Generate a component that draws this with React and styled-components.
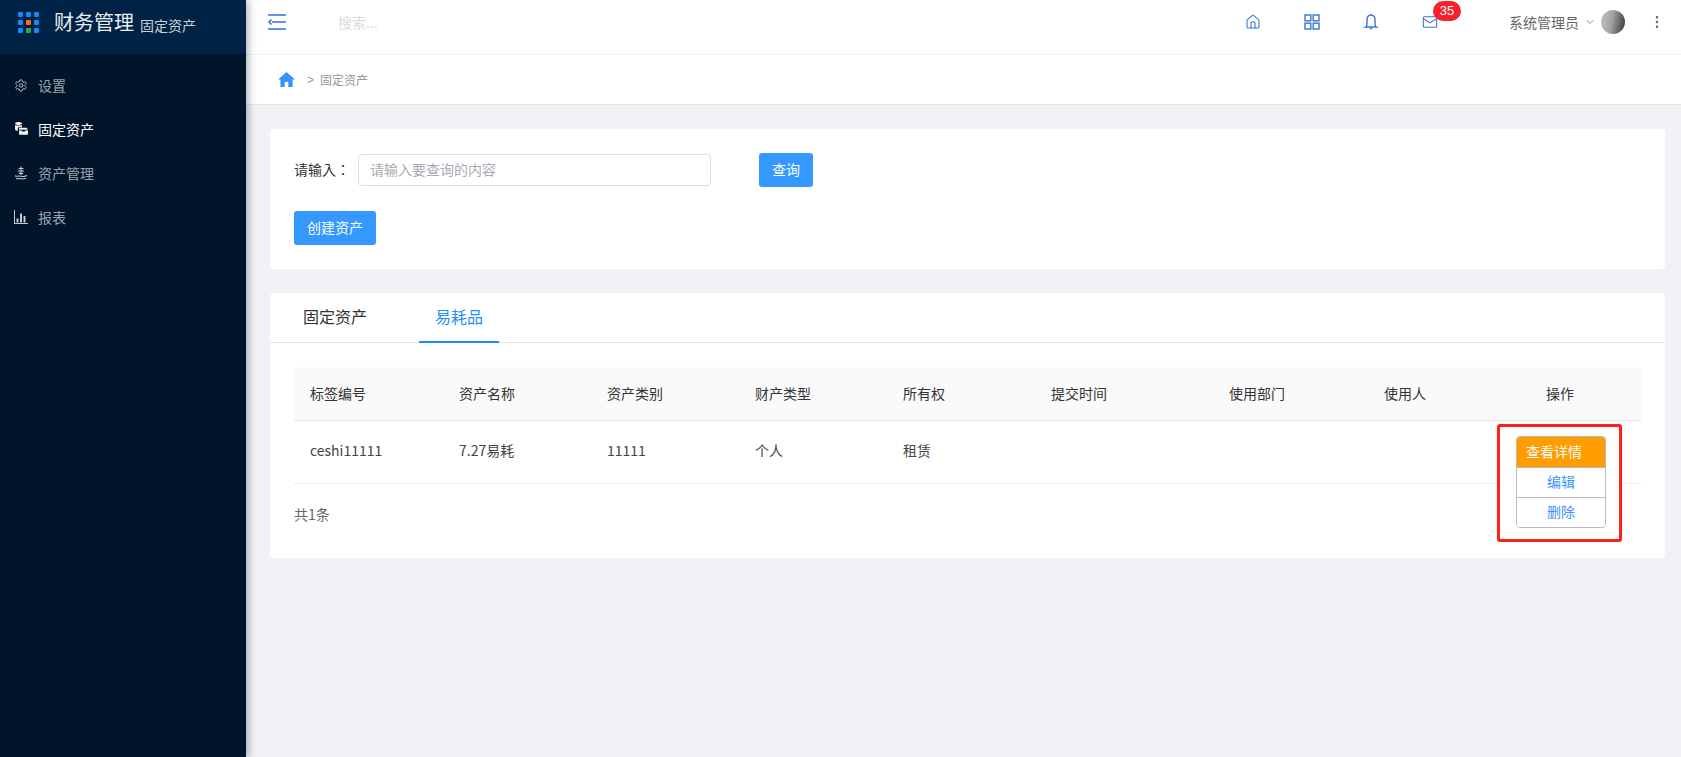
import React from 'react';
import styled, { createGlobalStyle } from 'styled-components';
import { Home, Mail, ChevronDown, MoreVertical, Settings } from 'lucide-react';

const Global = createGlobalStyle`
  html, body { margin: 0; padding: 0; height: 100%; background: #f0f2f5; }
  body { font-family: "Noto Sans CJK SC", "Noto Sans", sans-serif; font-size: 14px; color: #333; overflow: hidden; }
  * { box-sizing: border-box; }
`;
const Shell = styled.div`display: flex; height: 757px; width: 100%;`;
const Sidebar = styled.aside`
  width: 246px; flex: none; background: #00142a; box-shadow: 2px 0 8px rgba(0,21,41,.35); position: relative; z-index: 2;
`;
const Brand = styled.div`
  height: 54px; background: #002244; display: flex; align-items: center; padding: 0 0 10px 18px; color: #e8edf2;
`;
const BrandTitle = styled.span`font-size: 20px; line-height: 28px; margin-left: 15px;`;
const BrandSub = styled.span`font-size: 14px; line-height: 20px; margin-left: 6px; margin-top: 6px; color: #c8d0d8;`;
const Menu = styled.nav`padding-top: 9px; display: flex; flex-direction: column;`;
const MenuItem = styled.a`
  height: 44px; display: flex; align-items: center; padding-left: 14px; gap: 10px; font-size: 14px;
  color: ${p => (p.$active ? '#fff' : 'rgba(255,255,255,.62)')};
`;
const MenuIcon = styled.span`width: 14px; height: 14px; display: flex; align-items: center; justify-content: center; color: ${p => (p.$active ? '#f0f0f0' : '#c5cad0')};`;
const Main = styled.main`flex: 1; min-width: 0; display: flex; flex-direction: column;`;
const Header = styled.header`
  height: 55px; background: #fff; border-bottom: 1px solid #f2f2f2; display: flex; align-items: center; padding: 0 0 10px 22px; flex: none;
`;
const Search = styled.span`margin-left: 52px; color: #dcdcdc; font-size: 14px; flex: 1;`;
const HeadIcons = styled.div`display: flex; align-items: center; gap: 43px; color: #3a72d8; margin-right: 71px;`;
const IconWrap = styled.span`position: relative; display: flex; width: 16px; height: 16px;`;
const Badge = styled.span`
  position: absolute; left: 11px; top: -13px; width: 28px; height: 20px; border-radius: 10px; background: #f5222d; color: #fff;
  font-size: 13px; line-height: 20px; text-align: center; font-family: "Liberation Sans", sans-serif;
`;
const User = styled.div`display: flex; align-items: center; color: #666; font-size: 14px;`;
const Avatar = styled.span`
  width: 24px; height: 24px; border-radius: 50%; margin-left: 5px;
  background: linear-gradient(100deg, #c4c4c4 0%, #a2a2a2 45%, #77797b 65%, #33383d 100%);
`;
const Dots = styled.span`display: flex; margin: 0 16px 0 24px; color: #666;`;
const Crumbs = styled.div`
  height: 50px; background: #fff; border-bottom: 1px solid #e6e6e6; display: flex; align-items: center; padding-left: 32px; color: #999; font-size: 12px; flex: none;
`;
const CrumbSep = styled.span`margin: 0 6px 0 12px; font-family: "Liberation Sans", sans-serif;`;
const Content = styled.div`padding: 24px 16px 0 24px; display: flex; flex-direction: column; gap: 24px;`;
const Card = styled.section`background: #fff; border-radius: 4px;`;
const FilterCard = styled(Card)`height: 140px; padding: 24px 24px 0;`;
const FilterRow = styled.div`display: flex; align-items: center; height: 34px; margin-bottom: 24px;`;
const Label = styled.label`width: 64px; color: #333; font-size: 14px; padding-bottom: 2px; font-family: "Noto Sans CJK TC", sans-serif;`;
const Input = styled.input`
  width: 353px; height: 32px; border: 1px solid #dcdfe6; border-radius: 4px; padding: 0 11px 1px; font: inherit; font-size: 14px; outline: none; margin-top: -1px;
  &::placeholder { color: #a8abb2; }
`;
const PrimaryButton = styled.button`
  height: 34px; border: 0; border-radius: 3px; background: #3498ff; color: #fff; font: inherit; font-size: 14px; padding: 0 0 2px; width: ${p => p.$w}px;
  margin-left: ${p => p.$ml || 0}px;
`;
const Tabs = styled.div`display: flex; height: 50px; border-bottom: 1px solid #e4e4e4; padding-left: 15px;`;
const Tab = styled.div`
  width: ${p => p.$w}px; margin-right: ${p => p.$mr || 0}px; height: 50px; display: flex; align-items: center; justify-content: center; font-size: 16px; padding-bottom: 2px;
  color: ${p => (p.$active ? '#1f8fff' : '#333')};
  border-bottom: 2px solid ${p => (p.$active ? '#1890ff' : 'transparent')};
`;
const TableWrap = styled.div`padding: 24px 24px 0;`;
const Table = styled.table`width: 100%; border-collapse: collapse; table-layout: fixed; font-size: 14px;`;
const Th = styled.th`
  height: 53px; background: #fafafa; border-bottom: 1px solid #e8e8e8; font-weight: 400; color: #333; text-align: ${p => p.$center ? 'center' : 'left'};
  padding: 0 ${p => p.$center ? 17 : 16}px 1px ${p => p.$center ? 15 : 16}px;
`;
const Td = styled.td`height: 63px; border-bottom: 1px solid #ececec; color: #444; padding: 0 16px 3px; position: relative;`;
const ActionFrame = styled.div`
  position: absolute; left: 16px; top: 3px; width: 125px; height: 118px; border: 3px solid #ff1f14; border-radius: 3px; background: #fff; padding: 9px 0 0 16px; z-index: 1;
`;
const ActionGroup = styled.div`width: 90px; border: 1px solid #bbb; border-radius: 4px; overflow: hidden;`;
const ActionButton = styled.div`
  height: 30px; display: flex; align-items: center; font-size: 14px; padding-bottom: 2px;
  justify-content: ${p => (p.$primary ? 'flex-start' : 'center')};
  padding-left: ${p => (p.$primary ? '9px' : 0)};
  background: ${p => (p.$primary ? '#ff9c00' : '#fff')};
  color: ${p => (p.$primary ? '#fff' : '#3f95ff')};
  border-top: ${p => (p.$primary ? 0 : '1px solid #bbb')};
`;
const Total = styled.div`padding: 19px 24px 33px; line-height: 22px; color: #666; font-size: 14px;`;

const LogoGrid = styled.div`display: grid; grid-template-columns: repeat(3, 5px); gap: 3px;`;
const LogoDot = styled.i`width: 5px; height: 5px; border-radius: 1px; background: ${p => p.$c};`;

const dotColors = ['#0d8bff','#0d8bff','#0d8bff','#0d8bff','#ff6a13','#0d8bff','#0d8bff','#2fa84f','#0d8bff'];
const columns = [
  ['标签编号',149],['资产名称',148],['资产类别',148],['财产类型',148],['所有权',148],['提交时间',178],['使用部门',155],['使用人',113],['操作',160],
];

const Hamburger = () => (
  <svg width="18" height="16" viewBox="0 0 18 16" fill="none" stroke="#2f6fd6" strokeWidth="1.5">
    <path d="M0 1h18M0 15h18M4 8h14M3.500 5.500 1 8l2.500 2.500" />
  </svg>
);
const GridIcon = () => (
  <svg width="16" height="16" viewBox="0 0 16 16" fill="none" stroke="currentColor" strokeWidth="1.400">
    <rect x="1" y="1" width="5.800" height="5.800" />
    <rect x="9.200" y="1" width="5.800" height="5.800" />
    <rect x="1" y="9.200" width="5.800" height="5.800" />
    <rect x="9.200" y="9.200" width="5.800" height="5.800" />
  </svg>
);
const BellIcon = () => (
  <svg width="16" height="16" viewBox="0 0 16 16" fill="none" stroke="currentColor" strokeWidth="1.400">
    <path d="M8 1c-2.600 0-4 2-4 4.500V10c0 1.500-.6 2.500-1.500 3h11c-.9-.5-1.500-1.500-1.500-3V5.500C12 3 10.600 1 8 1z" />
    <path d="M8 0v1M6.800 14.600h2.400" strokeWidth="1.500" />
  </svg>
);
const BarsIcon = () => (
  <svg width="14" height="14" viewBox="0 0 14 14" fill="currentColor">
    <path d="M0 0h1v13h13v1H0z" />
    <path d="M2.500 8.500h2v4h-2zM6 3.500h2v9H6zM9.500 6h2v6.500h-2z" />
  </svg>
);
const AssetsIcon = () => (
  <svg width="14" height="14" viewBox="0 0 14 14" fill="currentColor">
    <path d="M1 1.500C1 .7 2.600 0 4.500 0S8 .7 8 1.500 6.400 3 4.500 3 1 2.300 1 1.500zM1 3c1 .8 6 .8 7 0v2.200H5.200c-.9 0-1.400.6-1.400 1.400V8.700C2.300 8.600 1 8.100 1 7.400z" />
    <path d="M5 6.500c0-.4.3-.7.7-.7h7c.4 0 .7.300.7.700v1.200H5zM5 8.500h3v1h3v-1h3v3.200c0 .6-.4 1-1 1H6c-.6 0-1-.4-1-1z" />
  </svg>
);
const ManageIcon = () => (
  <svg width="14" height="14" viewBox="0 0 14 14" fill="none" stroke="currentColor" strokeWidth="1.100">
    <path d="M7 .5v7M4.500 2.500h5M4 5h6M4.800 7l2.200 1.200L9.200 7" />
    <path d="M1 9.800c2 1.200 3-.2 6 .4s4 .4 6-.6M2 12.500c2 .8 3-.4 5 .2s3.500 .2 5-.4" />
  </svg>
);
const HomeSolid = () => (
  <svg width="17" height="15" viewBox="0 0 17 15" fill="#3294ff">
    <path d="M8.500 0 17 7.600h-2.400V15H10.300V10H6.700v5H2.400V7.600H0z" />
  </svg>
);

export default function App() {
  return (
    <Shell>
      <Global />
      <Sidebar>
        <Brand>
          <LogoGrid>{dotColors.map((c, i) => <LogoDot key={i} $c={c} />)}</LogoGrid>
          <BrandTitle>财务管理</BrandTitle>
          <BrandSub>固定资产</BrandSub>
        </Brand>
        <Menu>
          <MenuItem><MenuIcon><Settings size={15} strokeWidth={1.5} /></MenuIcon>设置</MenuItem>
          <MenuItem $active><MenuIcon $active><AssetsIcon /></MenuIcon>固定资产</MenuItem>
          <MenuItem><MenuIcon><ManageIcon /></MenuIcon>资产管理</MenuItem>
          <MenuItem><MenuIcon><BarsIcon /></MenuIcon>报表</MenuItem>
        </Menu>
      </Sidebar>
      <Main>
        <Header>
          <Hamburger />
          <Search>搜索...</Search>
          <HeadIcons>
            <IconWrap><Home size={16} strokeWidth={1.6} /></IconWrap>
            <IconWrap><GridIcon /></IconWrap>
            <IconWrap><BellIcon /></IconWrap>
            <IconWrap><Mail size={16} strokeWidth={1.6} /><Badge>35</Badge></IconWrap>
          </HeadIcons>
          <User>
            系统管理员
            <ChevronDown size={12} strokeWidth={1.5} style={{ marginLeft: 5 }} />
            <Avatar />
          </User>
          <Dots><MoreVertical size={16} strokeWidth={1.8} /></Dots>
        </Header>
        <Crumbs>
          <HomeSolid />
          <CrumbSep>&gt;</CrumbSep>
          固定资产
        </Crumbs>
        <Content>
          <FilterCard>
            <FilterRow>
              <Label>请输入：</Label>
              <Input placeholder="请输入要查询的内容" />
              <PrimaryButton $w={54} $ml={48}>查询</PrimaryButton>
            </FilterRow>
            <PrimaryButton $w={82}>创建资产</PrimaryButton>
          </FilterCard>
          <Card>
            <Tabs>
              <Tab $w={100} $mr={34}>固定资产</Tab>
              <Tab $w={80} $active>易耗品</Tab>
            </Tabs>
            <TableWrap>
              <Table>
                <colgroup>{columns.map(([n, w]) => <col key={n} width={w} />)}</colgroup>
                <thead>
                  <tr>{columns.map(([n], i) => <Th key={n} $center={i === 8}>{n}</Th>)}</tr>
                </thead>
                <tbody>
                  <tr>
                    <Td>ceshi11111</Td>
                    <Td>7.27易耗</Td>
                    <Td>11111</Td>
                    <Td>个人</Td>
                    <Td>租赁</Td>
                    <Td />
                    <Td />
                    <Td />
                    <Td>
                      <ActionFrame>
                        <ActionGroup>
                          <ActionButton $primary>查看详情</ActionButton>
                          <ActionButton>编辑</ActionButton>
                          <ActionButton>删除</ActionButton>
                        </ActionGroup>
                      </ActionFrame>
                    </Td>
                  </tr>
                </tbody>
              </Table>
            </TableWrap>
            <Total>共1条</Total>
          </Card>
        </Content>
      </Main>
    </Shell>
  );
}
